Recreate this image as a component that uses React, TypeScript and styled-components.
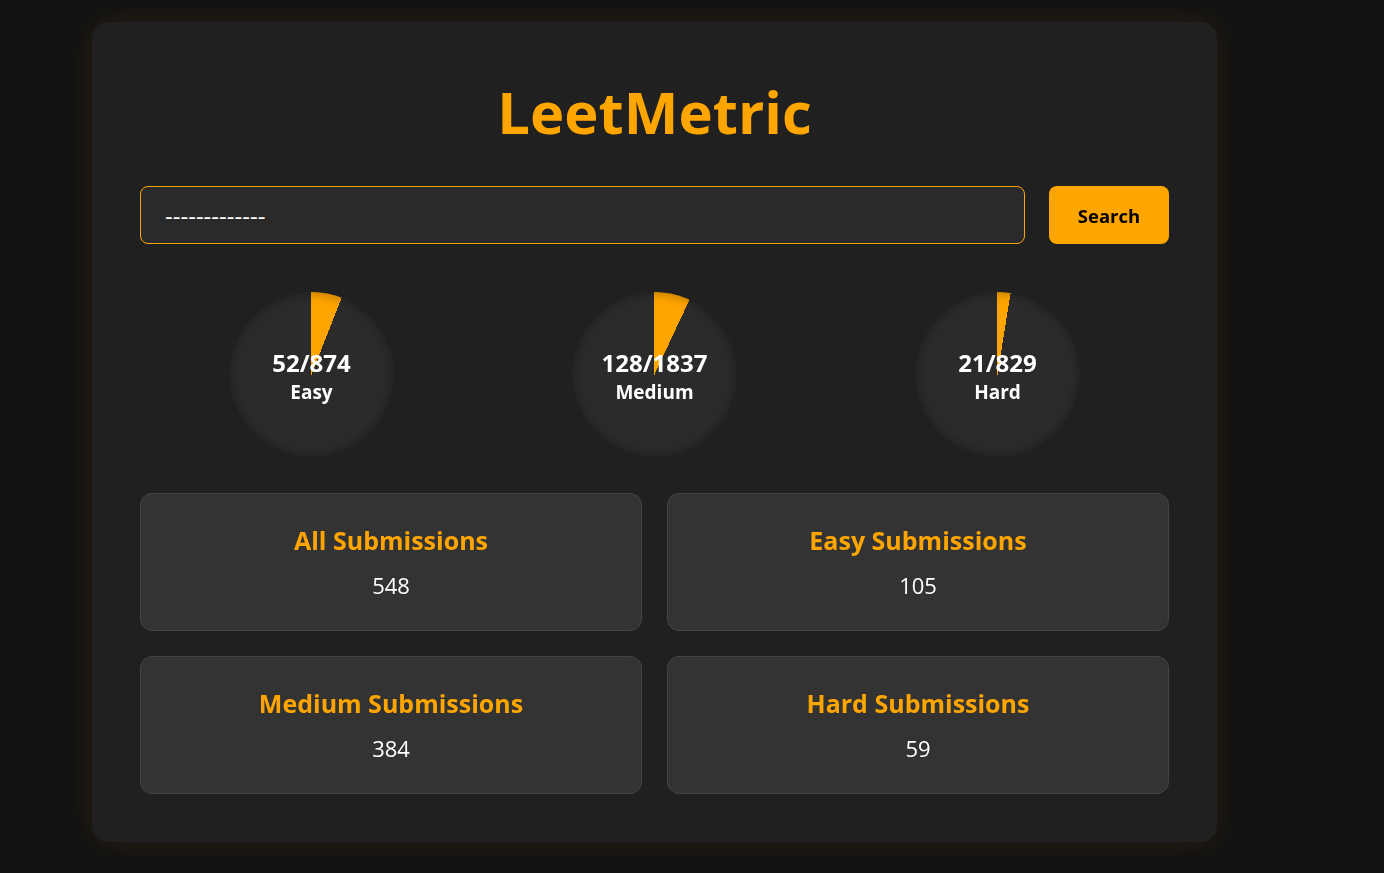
import React, { useState } from "react";
import styled, { createGlobalStyle } from "styled-components";

const GlobalStyle = createGlobalStyle`
  * {
    box-sizing: border-box;
  }

  body {
    margin: 0;
    background: #121212;
    color: #ffffff;
    font-family: "Open Sans", "Noto Sans", sans-serif;
  }
`;

const ORANGE = "#ffa500";

type Level = {
  label: string;
  solved: number;
  total: number;
};

const levels: Level[] = [
  { label: "Easy", solved: 52, total: 874 },
  { label: "Medium", solved: 128, total: 1837 },
  { label: "Hard", solved: 21, total: 829 },
];

const submissions = [
  { title: "All Submissions", count: 548 },
  { title: "Easy Submissions", count: 105 },
  { title: "Medium Submissions", count: 384 },
  { title: "Hard Submissions", count: 59 },
];

export default function App() {
  const [username, setUsername] = useState("-------------");

  return (
    <>
      <GlobalStyle />
      <Page>
        <Container>
          <Title>LeetMetric</Title>

          <SearchRow>
            <SearchInput
              autoFocus
              value={username}
              onChange={(e) => setUsername(e.target.value)}
            />
            <SearchButton>Search</SearchButton>
          </SearchRow>

          <Progress>
            {levels.map((level) => (
              <Circle
                key={level.label}
                $percent={(level.solved / level.total) * 100}
              >
                <span>
                  {level.solved}/{level.total}
                </span>
                <small>{level.label}</small>
              </Circle>
            ))}
          </Progress>

          <StatsGrid>
            {submissions.map((item) => (
              <StatCard key={item.title}>
                <h4>{item.title}</h4>
                <p>{item.count}</p>
              </StatCard>
            ))}
          </StatsGrid>
        </Container>
      </Page>
    </>
  );
}

const Page = styled.div`
  min-height: 873px;
  padding: 22px 167px 30px 92px;
`;

const Container = styled.div`
  padding: 52px 48px 48px;
  background: #202020;
  border-radius: 16px;
  box-shadow: 0 0 30px rgba(255, 165, 0, 0.1);
`;

const Title = styled.h1`
  margin: 0 0 37px;
  text-align: center;
  color: ${ORANGE};
  font-size: 58px;
  line-height: 1.3;
  font-weight: 700;
`;

const SearchRow = styled.div`
  display: flex;
  gap: 24px;
  height: 58px;
`;

const SearchInput = styled.input`
  flex: 1;
  padding: 0 24px;
  background: #2a2a2a;
  border: 1px solid ${ORANGE};
  border-radius: 8px;
  color: #ffffff;
  font-family: "Open Sans", sans-serif;
  font-size: 24px;
  outline: none;
  caret-color: #ffffff;
`;

const SearchButton = styled.button`
  width: 120px;
  background: ${ORANGE};
  border: none;
  border-radius: 8px;
  color: #000000;
  font-family: "Open Sans", sans-serif;
  font-size: 18.5px;
  font-weight: 700;
  cursor: pointer;
`;

const Progress = styled.div`
  display: flex;
  justify-content: space-around;
  margin-top: 48px;
`;

const Circle = styled.div<{ $percent: number }>`
  width: 165px;
  height: 165px;
  display: flex;
  flex-direction: column;
  align-items: center;
  justify-content: center;
  border-radius: 50%;
  background: conic-gradient(
    ${ORANGE} ${({ $percent }) => $percent}%,
    #2b2b2b 0%
  );
  box-shadow: inset 0 0 12px rgba(0, 0, 0, 0.35);
  padding-top: 4px;

  span {
    font-size: 24px;
    font-weight: 700;
    line-height: 30px;
  }

  small {
    font-size: 19px;
    font-weight: 700;
    line-height: 28px;
  }
`;

const StatsGrid = styled.div`
  display: grid;
  grid-template-columns: 1fr 1fr;
  gap: 25px;
  margin-top: 36px;
`;

const StatCard = styled.div`
  height: 138px;
  display: flex;
  flex-direction: column;
  align-items: center;
  justify-content: center;
  gap: 16px;
  background: #333333;
  border: 1px solid #444444;
  border-radius: 12px;

  h4 {
    margin: 0;
    color: ${ORANGE};
    font-size: 25px;
    font-weight: 700;
    line-height: 30px;
  }

  p {
    margin: 0;
    color: #ffffff;
    font-size: 22px;
    line-height: 28px;
  }
`;
